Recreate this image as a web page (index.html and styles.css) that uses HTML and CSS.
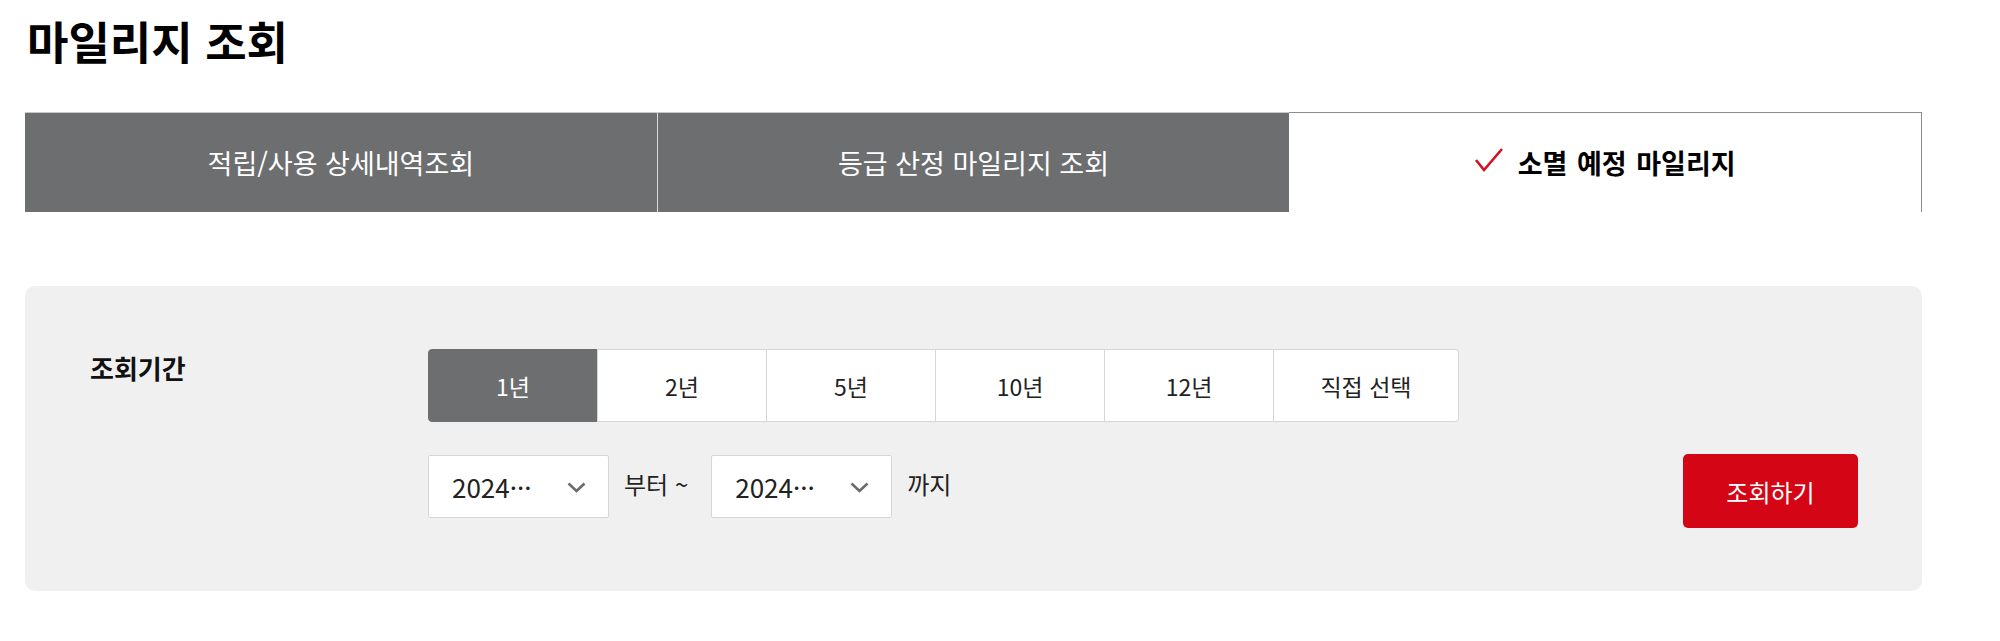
FILE: index.html
```html
<!DOCTYPE html>
<html lang="ko">
<head>
<meta charset="utf-8">
<title>마일리지 조회</title>
<link rel="stylesheet" href="styles.css">
</head>
<body>
<div class="page">
  <h1 class="title">마일리지 조회</h1>
  <nav class="tabs">
    <a class="tab">적립/사용 상세내역조회</a>
    <a class="tab">등급 산정 마일리지 조회</a>
    <a class="tab active"><svg class="check" viewBox="0 0 28 24" width="28" height="24"><polyline points="1,12 9,22 27,1" fill="none" stroke="#d6111d" stroke-width="2.6" stroke-linejoin="miter"/></svg><span>소멸 예정 마일리지</span></a>
  </nav>
  <section class="panel">
    <div class="label">조회기간</div>
    <div class="filters">
      <div class="periods">
        <button class="period on">1년</button>
        <button class="period">2년</button>
        <button class="period">5년</button>
        <button class="period">10년</button>
        <button class="period">12년</button>
        <button class="period wide">직접 선택</button>
      </div>
      <div class="range">
        <div class="select"><span class="val">2024···</span><svg class="chev" viewBox="0 0 19 11" width="19" height="11"><polyline points="1.5,1.5 9.5,9 17.5,1.5" fill="none" stroke="#6b6b6b" stroke-width="2.6"/></svg></div>
        <span class="txt">부터 ~</span>
        <div class="select second"><span class="val">2024···</span><svg class="chev" viewBox="0 0 19 11" width="19" height="11"><polyline points="1.5,1.5 9.5,9 17.5,1.5" fill="none" stroke="#6b6b6b" stroke-width="2.6"/></svg></div>
        <span class="txt">까지</span>
        <button class="search">조회하기</button>
      </div>
    </div>
  </section>
</div>
</body>
</html>
```
FILE: styles.css
```css
* { box-sizing: border-box; }
body {
  margin: 0;
  background: #fff;
  color: #111;
  font-family: "Noto Sans CJK KR", "Noto Sans", sans-serif;
}
.page {
  width: 1897px;
  margin-left: 25px;
}
.title {
  margin: 18px 0 0 2px;
  font-size: 45px;
  line-height: 45px;
  font-weight: 700;
  color: #000;
}
.tabs {
  display: flex;
  height: 100px;
  margin-top: 49px;
}
.tab {
  flex: 1 1 0;
  display: flex;
  align-items: center;
  justify-content: center;
  background: #6d6e70;
  color: #fff;
  font-size: 27px;
  border-top: 1px solid #c9c9c9;
}
.tab + .tab { border-left: 1px solid #dcdcdc; }
.tab.active {
  background: #fff;
  color: #000;
  font-weight: 700;
  word-spacing: 2px;
  border-top: 1px solid #8c8c8c;
  border-right: 1px solid #8c8c8c;
  border-left: none;
}
.check { margin-right: 15px; margin-top: -6px; }
.panel {
  display: flex;
  margin-top: 74px;
  padding: 63px 64px 63px 65px;
  background: #f0f0f0;
  border-radius: 10px;
}
.label {
  width: 338px;
  flex: none;
  font-size: 26px;
  font-weight: 700;
  color: #111;
}
.filters { flex: 1; }
.periods { display: flex; }
.period {
  width: 170px;
  height: 73px;
  margin: 0 0 0 -1px;
  padding: 0;
  background: #fff;
  border: 1px solid #d6d6d6;
  font-family: inherit;
  font-size: 23px;
  color: #222;
}
.period:first-child { margin-left: 0; border-radius: 4px 0 0 4px; }
.period.wide { width: 186px; border-radius: 0 4px 4px 0; }
.period.on { background: #6d6e70; border-color: #6d6e70; color: #fff; }
.range {
  display: flex;
  align-items: flex-start;
  margin-top: 33px;
}
.select {
  width: 181px;
  height: 63px;
  display: flex;
  align-items: center;
  justify-content: space-between;
  padding: 0 22px 0 23px;
  background: #fff;
  border: 1px solid #d6d6d6;
  border-radius: 2px;
  font-size: 26px;
  color: #222;
}
.chev { margin-top: 2px; }
.txt {
  font-size: 24px;
  line-height: 58px;
  color: #222;
  margin-left: 15px;
}
.select.second { margin-left: 23px; }
.search {
  margin-left: auto;
  margin-top: -1px;
  width: 175px;
  height: 74px;
  background: #d40616;
  border: none;
  border-radius: 5px;
  color: #fff;
  font-family: inherit;
  font-size: 24px;
}
```
